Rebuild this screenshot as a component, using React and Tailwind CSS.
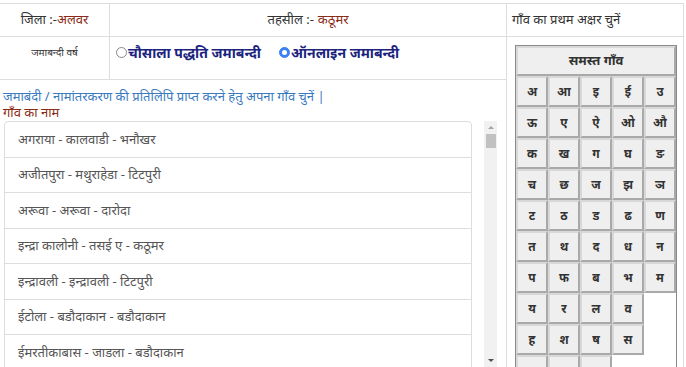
import React from "react";

const villages = [
  "अगराया - कालवाडी - भनौखर",
  "अजीतपुरा - मथुराहेडा - टिटपुरी",
  "अरूवा - अरूवा - दारोदा",
  "इन्द्रा कालोनी - तसई ए - कठूमर",
  "इन्द्रावली - इन्द्रावली - टिटपुरी",
  "ईटोला - बडौदाकान - बडौदाकान",
  "ईमरतीकाबास - जाडला - बडौदाकान",
];

const letterRows = [
  ["अ", "आ", "इ", "ई", "उ"],
  ["ऊ", "ए", "ऐ", "ओ", "औ"],
  ["क", "ख", "ग", "घ", "ङ"],
  ["च", "छ", "ज", "झ", "ञ"],
  ["ट", "ठ", "ड", "ढ", "ण"],
  ["त", "थ", "द", "ध", "न"],
  ["प", "फ", "ब", "भ", "म"],
  ["य", "र", "ल", "व"],
  ["ह", "श", "ष", "स"],
  ["क्ष", "त्र", "ज्ञ"],
];

const LetterBtn = ({ children }) => (
  <div className="h-[31px] flex items-center justify-center bg-[#efefef] border-2 border-[#a9a9a9] border-t-[#d8d8d8] border-l-[#d8d8d8] text-[12px] font-bold text-[#333]">
    {children}
  </div>
);

const App = () => {
  return (
    <div className="w-[686px] h-[367px] overflow-hidden bg-white pt-[3px] text-[13px] text-[#333]" style={{ fontFamily: '"Noto Sans", "Open Sans", sans-serif' }}>
      <div className="w-[684px] border-t border-r border-[#ddd]">
        {/* top row */}
        <div className="flex h-[33px] border-b border-[#ddd]">
          <div className="w-[110px] border-r border-[#ddd] flex items-center justify-center">
            जिला :-<span className="text-[#8b2a14]">अलवर</span>
          </div>
          <div className="w-[397px] border-r border-[#ddd] flex items-center justify-center">
            तहसील :- <span className="text-[#8b2a14] ml-1">कठूमर</span>
          </div>
          <div className="flex-1 flex items-center pl-[5px]">गाँव का प्रथम अक्षर चुनें</div>
        </div>

        <div className="flex">
          {/* left part */}
          <div className="w-[507px] border-r border-[#ddd]">
            <div className="flex h-[43px] border-b border-[#ddd]">
              <div className="w-[110px] border-r border-[#ddd] flex justify-center pt-[8px] text-[10px]">जमाबन्दी वर्ष</div>
              <div className="flex-1 flex items-start pt-[5px] pl-[6px] gap-[18px] font-bold text-[14px] text-[#1a237e]">
                <label className="flex items-center">
                  <span className="w-[11px] h-[11px] rounded-full border border-[#888] bg-white mr-[1px]"></span>
                  चौसाला पद्धति जमाबन्दी
                </label>
                <label className="flex items-center">
                  <span className="w-[11px] h-[11px] rounded-full border border-[#3b82f6] bg-[#3b82f6] mr-[1px] flex items-center justify-center">
                    <span className="w-[5px] h-[5px] rounded-full bg-white"></span>
                  </span>
                  ऑनलाइन जमाबन्दी
                </label>
              </div>
            </div>

            <div className="pl-[3px] pt-[8px] leading-[16px]">
              <div className="text-[#3a7bbf]">जमाबंदी / नामांतरकरण की प्रतिलिपि प्राप्त करने हेतु अपना गाँव चुनें |</div>
              <div className="text-[#8b2a14]">गाँव का नाम</div>
            </div>

            <div className="flex pl-[4px] pt-[1px] h-[250px]">
              <div className="w-[468px] border border-[#ddd] rounded-t-[4px] overflow-hidden">
                {villages.map((v) => (
                  <div key={v} className="h-[35.5px] flex items-center pl-[13px] border-b border-[#ddd] text-[#555]">
                    {v}
                  </div>
                ))}
              </div>
              <div className="ml-[12px] w-[13px] bg-[#f1f1f1] flex flex-col items-center">
                <span className="mt-[5px] w-0 h-0 border-l-[3px] border-r-[3px] border-b-[3px] border-l-transparent border-r-transparent border-b-[#a3a3a3]"></span>
                <span className="mt-[5px] w-[10px] h-[14px] bg-[#c1c1c1]"></span>
                <span className="mt-auto mb-[8px] w-0 h-0 border-l-[3px] border-r-[3px] border-t-[3px] border-l-transparent border-r-transparent border-t-[#505050]"></span>
              </div>
            </div>
          </div>

          {/* right letters */}
          <div className="flex-1 pl-[8px] pt-[8px]">
            <div className="w-[162px] border border-[#8a8a8a] border-b-0 h-[330px] bg-white">
              <div className="h-[30px] flex items-center justify-center bg-[#efefef] border-2 border-[#a9a9a9] border-t-[#d8d8d8] border-l-[#d8d8d8] text-[13px] font-bold text-[#333]">
                समस्त गाँव
              </div>
              {letterRows.map((row, i) => (
                <div key={i} className="grid grid-cols-5 gap-0">
                  {row.map((l) => (
                    <LetterBtn key={l}>{l}</LetterBtn>
                  ))}
                </div>
              ))}
            </div>
          </div>
        </div>
      </div>
    </div>
  );
};

export default App;
